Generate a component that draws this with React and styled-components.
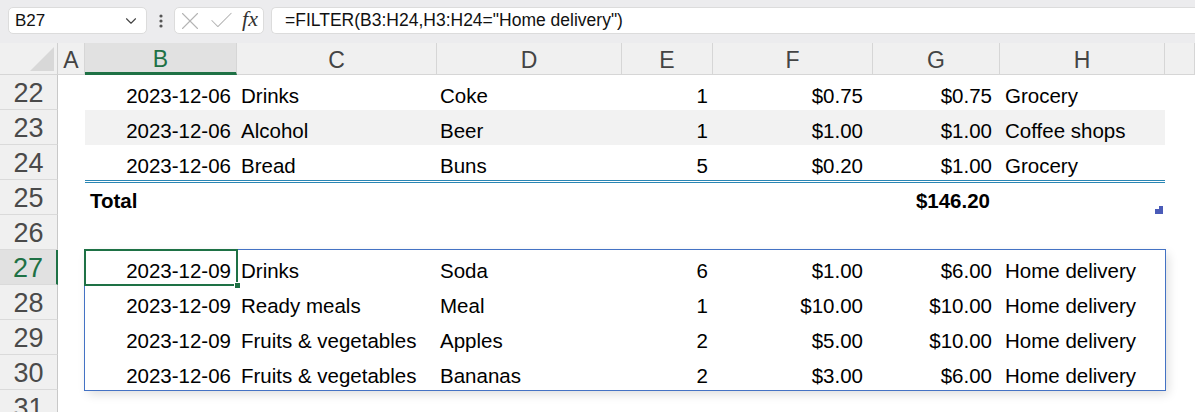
import React from 'react';
import styled, { createGlobalStyle, css } from 'styled-components';
import { ChevronDown, X, Check } from 'lucide-react';

const GREEN = '#1e7145';
const SPILL = '#4472c4';
const TABLE_LINE = '#2a86b4';

// widths of columns A..H, then the rest (I)
const COL_WIDTHS = [27, 152, 200, 185, 91, 160, 127, 165];
const BODY_COLS = COL_WIDTHS.slice(1).map(w => `${w}px`).join(' ');

// per column (B..H): alignment and padding
const COL_CONF = [
  { align: 'right', pad: 6 },
  { align: 'left', pad: 4 },
  { align: 'left', pad: 3 },
  { align: 'right', pad: 5 },
  { align: 'right', pad: 10 },
  { align: 'right', pad: 8 },
  { align: 'left', pad: 5 },
];

const tableRows = [
  ['2023-12-06', 'Drinks', 'Coke', '1', '$0.75', '$0.75', 'Grocery'],
  ['2023-12-06', 'Alcohol', 'Beer', '1', '$1.00', '$1.00', 'Coffee shops'],
  ['2023-12-06', 'Bread', 'Buns', '5', '$0.20', '$1.00', 'Grocery'],
];

const spillRows = [
  ['2023-12-09', 'Drinks', 'Soda', '6', '$1.00', '$6.00', 'Home delivery'],
  ['2023-12-09', 'Ready meals', 'Meal', '1', '$10.00', '$10.00', 'Home delivery'],
  ['2023-12-09', 'Fruits & vegetables', 'Apples', '2', '$5.00', '$10.00', 'Home delivery'],
  ['2023-12-06', 'Fruits & vegetables', 'Bananas', '2', '$3.00', '$6.00', 'Home delivery'],
];

const GlobalStyle = createGlobalStyle`
  * { box-sizing: border-box; }
  html, body {
    margin: 0;
    height: 412px;
    overflow: hidden;
    background: #ffffff;
    font-family: "Liberation Sans", Arial, sans-serif;
  }
`;

const App = () => (
  <>
    <GlobalStyle />
    <Page>
      <FormulaBar>
        <NameBox>
          <span>B27</span>
          <ChevronDown size={18} strokeWidth={1.5} color="#444" />
        </NameBox>
        <Grip>
          <svg width="4" height="14" viewBox="0 0 4 14">
            <circle cx="2" cy="2" r="1.6" fill="#555" />
            <circle cx="2" cy="7" r="1.6" fill="#555" />
            <circle cx="2" cy="12" r="1.6" fill="#555" />
          </svg>
        </Grip>
        <FxBox>
          <IconSlot $w={22}>
            <X size={30} strokeWidth={0.85} color="#b4b4b4" />
          </IconSlot>
          <IconSlot $w={24}>
            <Check size={29} strokeWidth={0.85} color="#b4b4b4" />
          </IconSlot>
          <FxLabel>fx</FxLabel>
        </FxBox>
        <FormulaInput>=FILTER(B3:H24,H3:H24="Home delivery")</FormulaInput>
      </FormulaBar>

      <ColumnHeaders>
        <Corner />
        {['A', 'B', 'C', 'D', 'E', 'F', 'G', 'H'].map((l, i) => (
          <ColHead key={l} $w={COL_WIDTHS[i]} $active={l === 'B'}>
            {l}
          </ColHead>
        ))}
        <ColHead $fill />
      </ColumnHeaders>

      <Sheet>
        <RowHeaders>
          {[22, 23, 24, 25, 26, 27, 28, 29, 30, 31].map(n => (
            <RowNum key={n} $active={n === 27}>
              {n}
            </RowNum>
          ))}
        </RowHeaders>

        <Body>
          {tableRows.map((r, i) => (
            <Row key={i} $striped={i === 1}>
              {r.map((v, c) => (
                <Cell key={c} $align={COL_CONF[c].align} $pad={COL_CONF[c].pad}>
                  {v}
                </Cell>
              ))}
            </Row>
          ))}
          <TotalRow>
            <Cell $align="left" $pad={5} $bold>
              Total
            </Cell>
            <Cell />
            <Cell />
            <Cell />
            <Cell />
            <Cell $align="right" $pad={10} $bold>
              $146.20
            </Cell>
            <Cell />
            <ResizeHandle viewBox="0 0 8 8" width="8" height="8">
              <path d="M4 0H8V8H0V3H4Z" fill="#4a5bb8" />
            </ResizeHandle>
          </TotalRow>
          <Row />
          <SpillRange>
            {spillRows.map((r, i) => (
              <Row key={i}>
                {r.map((v, c) => (
                  <Cell
                    key={c}
                    $align={COL_CONF[c].align}
                    $pad={COL_CONF[c].pad}
                    $selected={i === 0 && c === 0}
                  >
                    {v}
                    {i === 0 && c === 0 && <FillHandle />}
                  </Cell>
                ))}
              </Row>
            ))}
          </SpillRange>
          <Row />
        </Body>
      </Sheet>
    </Page>
  </>
);

export default App;

const Page = styled.div`
  width: 1195px;
  height: 412px;
  overflow: hidden;
  display: flex;
  flex-direction: column;
`;

const FormulaBar = styled.div`
  height: 43px;
  flex-shrink: 0;
  background: #ececee;
  display: flex;
  align-items: flex-start;
  padding: 7px 0 0 8px;
`;

const boxBase = css`
  height: 27px;
  background: #ffffff;
  border: 1px solid #dcdcdc;
  border-radius: 5px;
  display: flex;
  align-items: center;
`;

const NameBox = styled.div`
  ${boxBase};
  width: 139px;
  justify-content: space-between;
  padding: 0 6px 0 6px;
  font-size: 17px;
  color: #111;
`;

const Grip = styled.div`
  width: 27px;
  height: 27px;
  display: flex;
  align-items: center;
  justify-content: center;
`;

const FxBox = styled.div`
  ${boxBase};
  width: 90px;
  padding: 0 5px 0 4px;
  justify-content: space-between;
  overflow: hidden;
`;

const IconSlot = styled.span`
  width: ${p => p.$w}px;
  height: 25px;
  display: flex;
  align-items: center;
  justify-content: center;
  svg {
    flex-shrink: 0;
  }
`;

const FxLabel = styled.span`
  font-family: "Liberation Serif", "Times New Roman", serif;
  font-style: italic;
  font-size: 22px;
  color: #333;
  margin-top: -3px;
`;

const FormulaInput = styled.div`
  ${boxBase};
  flex: 1;
  margin-left: 7px;
  border-right: none;
  border-radius: 5px 0 0 5px;
  padding-left: 13px;
  font-size: 17.5px;
  color: #111;
  white-space: nowrap;
`;

const ColumnHeaders = styled.div`
  height: 32px;
  flex-shrink: 0;
  display: flex;
  background: #f0f0f0;
`;

const Corner = styled.div`
  width: 58px;
  position: relative;
  border-right: 1px solid #d0d0d0;
  border-bottom: 1px solid #d6d6d6;
  &::after {
    content: '';
    position: absolute;
    right: 3px;
    bottom: 3px;
    border-left: 24px solid transparent;
    border-bottom: 24px solid #d8d8d8;
  }
`;

const ColHead = styled.div`
  width: ${p => (p.$w ? `${p.$w}px` : 'auto')};
  flex: ${p => (p.$fill ? 1 : 'none')};
  display: flex;
  align-items: center;
  justify-content: center;
  padding-top: 3px;
  font-size: 23px;
  color: ${p => (p.$active ? GREEN : '#444')};
  background: ${p => (p.$active ? '#e1e1e1' : 'transparent')};
  border-right: 1px solid #d6d6d6;
  border-bottom: ${p => (p.$active ? `3px solid ${GREEN}` : '1px solid #d6d6d6')};
`;

const Sheet = styled.div`
  flex: 1;
  display: flex;
  min-height: 0;
`;

const RowHeaders = styled.div`
  width: 58px;
  flex-shrink: 0;
  display: flex;
  flex-direction: column;
`;

const RowNum = styled.div`
  height: 35px;
  flex-shrink: 0;
  display: flex;
  align-items: center;
  justify-content: center;
  padding-top: 3px;
  font-size: 27px;
  color: ${p => (p.$active ? GREEN : '#4a4a4a')};
  background: ${p => (p.$active ? '#e1e1e1' : '#f0f0f0')};
  border-bottom: 1px solid #dadada;
  border-right: ${p => (p.$active ? `2px solid ${GREEN}` : '1px solid #c8c8c8')};
`;

const Body = styled.div`
  display: flex;
  flex-direction: column;
  padding-left: 27px;
`;

const Row = styled.div`
  height: 35px;
  flex-shrink: 0;
  display: grid;
  grid-template-columns: ${BODY_COLS};
  background: ${p => (p.$striped ? '#f2f2f2' : 'transparent')};
`;

const TotalRow = styled(Row)`
  position: relative;
  border-top: 3px double ${TABLE_LINE};
`;

const Cell = styled.div`
  position: relative;
  display: flex;
  align-items: flex-end;
  justify-content: ${p => (p.$align === 'right' ? 'flex-end' : 'flex-start')};
  padding: 0 ${p => (p.$align === 'right' ? p.$pad : 0)}px 2px
    ${p => (p.$align === 'left' ? p.$pad : 0)}px;
  font-size: 20.5px;
  font-weight: ${p => (p.$bold ? 700 : 400)};
  color: #000;
  white-space: nowrap;
  ${p =>
    p.$selected &&
    css`
      box-shadow: 0 0 0 1px ${GREEN}, inset 0 0 0 1px ${GREEN};
      z-index: 2;
    `}
`;

const FillHandle = styled.span`
  position: absolute;
  right: -4px;
  bottom: -4px;
  width: 7px;
  height: 7px;
  background: ${GREEN};
  border: 1px solid #fff;
`;

const SpillRange = styled.div`
  display: flex;
  flex-direction: column;
  width: 1080px;
  outline: 1px solid ${SPILL};
  box-shadow: 3px 4px 10px rgba(0, 0, 0, 0.14);
  position: relative;
  z-index: 1;
`;

const ResizeHandle = styled.svg`
  position: absolute;
  right: 2px;
  bottom: 1px;
`;
